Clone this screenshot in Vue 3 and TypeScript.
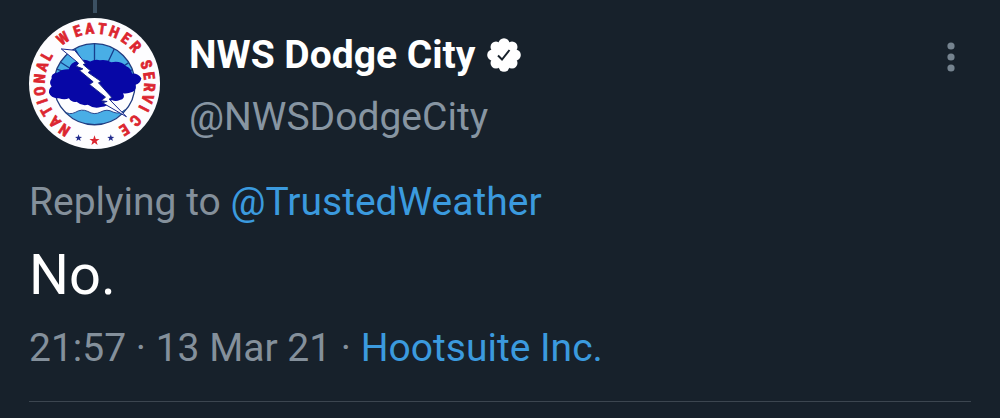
<script setup lang="ts">
interface RingLetter {
  char: string
  angle: number
}

const ring: RingLetter[] = [
  { char: 'N', angle: -147 },
  { char: 'A', angle: -134 },
  { char: 'T', angle: -120 },
  { char: 'I', angle: -109 },
  { char: 'O', angle: -98 },
  { char: 'N', angle: -85 },
  { char: 'A', angle: -72 },
  { char: 'L', angle: -60 },
  { char: 'W', angle: -35 },
  { char: 'E', angle: -18 },
  { char: 'A', angle: -5 },
  { char: 'T', angle: 8 },
  { char: 'H', angle: 21 },
  { char: 'E', angle: 35 },
  { char: 'R', angle: 48 },
  { char: 'S', angle: 70 },
  { char: 'E', angle: 82 },
  { char: 'R', angle: 94 },
  { char: 'V', angle: 106 },
  { char: 'I', angle: 117 },
  { char: 'C', angle: 132 },
  { char: 'E', angle: 147 },
]

function starPoints(cx: number, cy: number, r: number): string {
  return Array.from({ length: 10 }, (_, i) => {
    const radius = i % 2 === 0 ? r : r * 0.4
    const a = (i * Math.PI) / 5
    return `${(cx + radius * Math.sin(a)).toFixed(1)},${(cy - radius * Math.cos(a)).toFixed(1)}`
  }).join(' ')
}

const petals = Array.from({ length: 8 }, (_, i) => {
  const a = (i * Math.PI) / 4
  return { x: 17 + 11.3 * Math.sin(a), y: 17 - 11.3 * Math.cos(a) }
})
</script>

<template>
  <article class="tweet">
    <header class="head">
      <div class="rail">
        <span class="thread"></span>
        <a href="#" class="avatar" aria-label="NWS Dodge City profile">
          <svg viewBox="27 54 394 394" aria-hidden="true">
            <defs>
              <clipPath id="disc"><circle cx="224" cy="253" r="122" /></clipPath>
            </defs>
            <circle cx="224" cy="251" r="197" fill="#fdfdff" />
            <g clip-path="url(#disc)">
              <rect x="100" y="130" width="250" height="250" fill="#fdfdff" />
              <path d="M100 130H350V232H100Z" fill="#49aee6" />
              <path d="M100 326Q116 336 132 334Q148 347 166 338Q185 326 204 335Q223 347 242 337Q262 326 280 337Q300 345 314 331L350 326V390H100Z" fill="#49aee6" stroke="#29488e" stroke-width="3" />
              <path d="M224 130V190M166 148L190 190M284 146L264 188M122 187L150 205M326 189L296 209M108 207L135 216M340 209L310 219" fill="none" stroke="#173e8d" stroke-width="4" />
            </g>
            <circle cx="224" cy="253" r="122" fill="none" stroke="#203c80" stroke-width="4" />
            <path d="M113 218Q126 207 147 208Q151 187 174 184Q193 174 211 185Q226 177 240 181Q260 178 274 187Q302 181 318 198Q335 205 337 221Q356 220 365 236Q361 252 347 255Q352 269 339 276Q321 283 310 280Q318 296 300 301Q288 307 276 301Q266 321 243 322Q222 328 204 315Q186 320 170 306Q156 309 147 295Q134 301 117 295Q94 297 87 279Q86 267 95 260Q86 249 95 236Q92 221 113 218Z" fill="#0707a6" />
            <path d="M124 147L164 151L197 191L190 194L212 213L205 218L244 245L236 249L276 293L268 298L320 351L248 309L262 305L244 303L257 292L209 254L220 246L179 212L189 207L169 199L176 190Z" fill="#fff" stroke="#17258c" stroke-width="3" stroke-linejoin="round" />
            <text
              v-for="(l, i) in ring"
              :key="i"
              class="ring"
              x="224"
              y="101"
              :transform="`rotate(${l.angle} 224 251)`"
            >{{ l.char }}</text>
            <polygon :points="starPoints(224, 423, 16)" fill="#dc2630" />
            <polygon :points="starPoints(176, 415, 11)" fill="#202a8d" />
            <polygon :points="starPoints(273, 415, 11)" fill="#202a8d" />
          </svg>
        </a>
      </div>
      <div class="names">
        <div class="name-row">
          <a href="#" class="name">NWS Dodge City</a>
          <svg class="badge" viewBox="0 0 34 34" role="img" aria-label="Verified account">
            <circle cx="17" cy="17" r="13" fill="#fff" />
            <circle v-for="(p, i) in petals" :key="i" :cx="p.x" :cy="p.y" r="5.5" fill="#fff" />
            <path d="M11 17.5L15 21.5L22.5 12" fill="none" stroke="#17212b" stroke-width="2" />
          </svg>
        </div>
        <a href="#" class="handle">@NWSDodgeCity</a>
      </div>
      <button type="button" class="more" aria-label="More options">
        <svg viewBox="0 0 8 32" aria-hidden="true">
          <circle cx="4" cy="5" r="3.6" />
          <circle cx="4" cy="16" r="3.6" />
          <circle cx="4" cy="27" r="3.6" />
        </svg>
      </button>
    </header>
    <p class="meta reply">Replying to <a href="#">@TrustedWeather</a></p>
    <p class="body">No.</p>
    <p class="meta stamp"><time datetime="2021-03-13T21:57">21:57 · 13 Mar 21</time> · <a href="#">Hootsuite Inc.</a></p>
  </article>
</template>

<style>
html,
body {
  background: #17212b;
}
body {
  margin: 0;
}
</style>

<style scoped>
.tweet {
  margin: 0 29px;
  border-bottom: 1px solid #3c4650;
  font-family: Roboto, "Liberation Sans", sans-serif;
  color: #fff;
}
a {
  color: #3b9ade;
  text-decoration: none;
}
.head {
  display: flex;
  align-items: flex-start;
}
.rail {
  display: flex;
  flex-direction: column;
  align-items: center;
  gap: 5px;
  width: 131px;
}
.thread {
  width: 4px;
  height: 13px;
  background: #3b5062;
}
.avatar,
.avatar svg {
  display: block;
  width: 131px;
  height: 131px;
}
.ring {
  font-family: "Liberation Sans Narrow", "Roboto Condensed", Roboto, sans-serif;
  font-size: 46px;
  font-weight: 700;
  text-anchor: middle;
  fill: #dc2630;
  stroke: #dc2630;
  stroke-width: 2px;
}
.names {
  flex: 1;
  padding: 32px 0 0 29px;
}
.name-row {
  display: flex;
  align-items: center;
  gap: 12px;
  height: 46px;
}
.name {
  font-size: 39px;
  line-height: 46px;
  font-weight: 700;
  color: #fff;
}
.badge {
  width: 34px;
  height: 34px;
}
.handle {
  display: block;
  margin-top: 16px;
  font-size: 39px;
  line-height: 46px;
  color: #8795a2;
}
.more {
  width: 40px;
  margin-top: 41px;
  padding: 0;
  border: 0;
  background: none;
}
.more svg {
  display: block;
  width: 8px;
  height: 32px;
  margin: 0 auto;
  fill: #75838f;
}
.meta {
  margin: 0;
  font-size: 39px;
  line-height: 46px;
  color: #84909b;
}
.reply {
  margin-top: 30px;
}
.body {
  margin: 17px 0 0;
  font-size: 56px;
  line-height: 66px;
}
.stamp {
  margin-top: 17px;
  padding-bottom: 30px;
}
</style>
